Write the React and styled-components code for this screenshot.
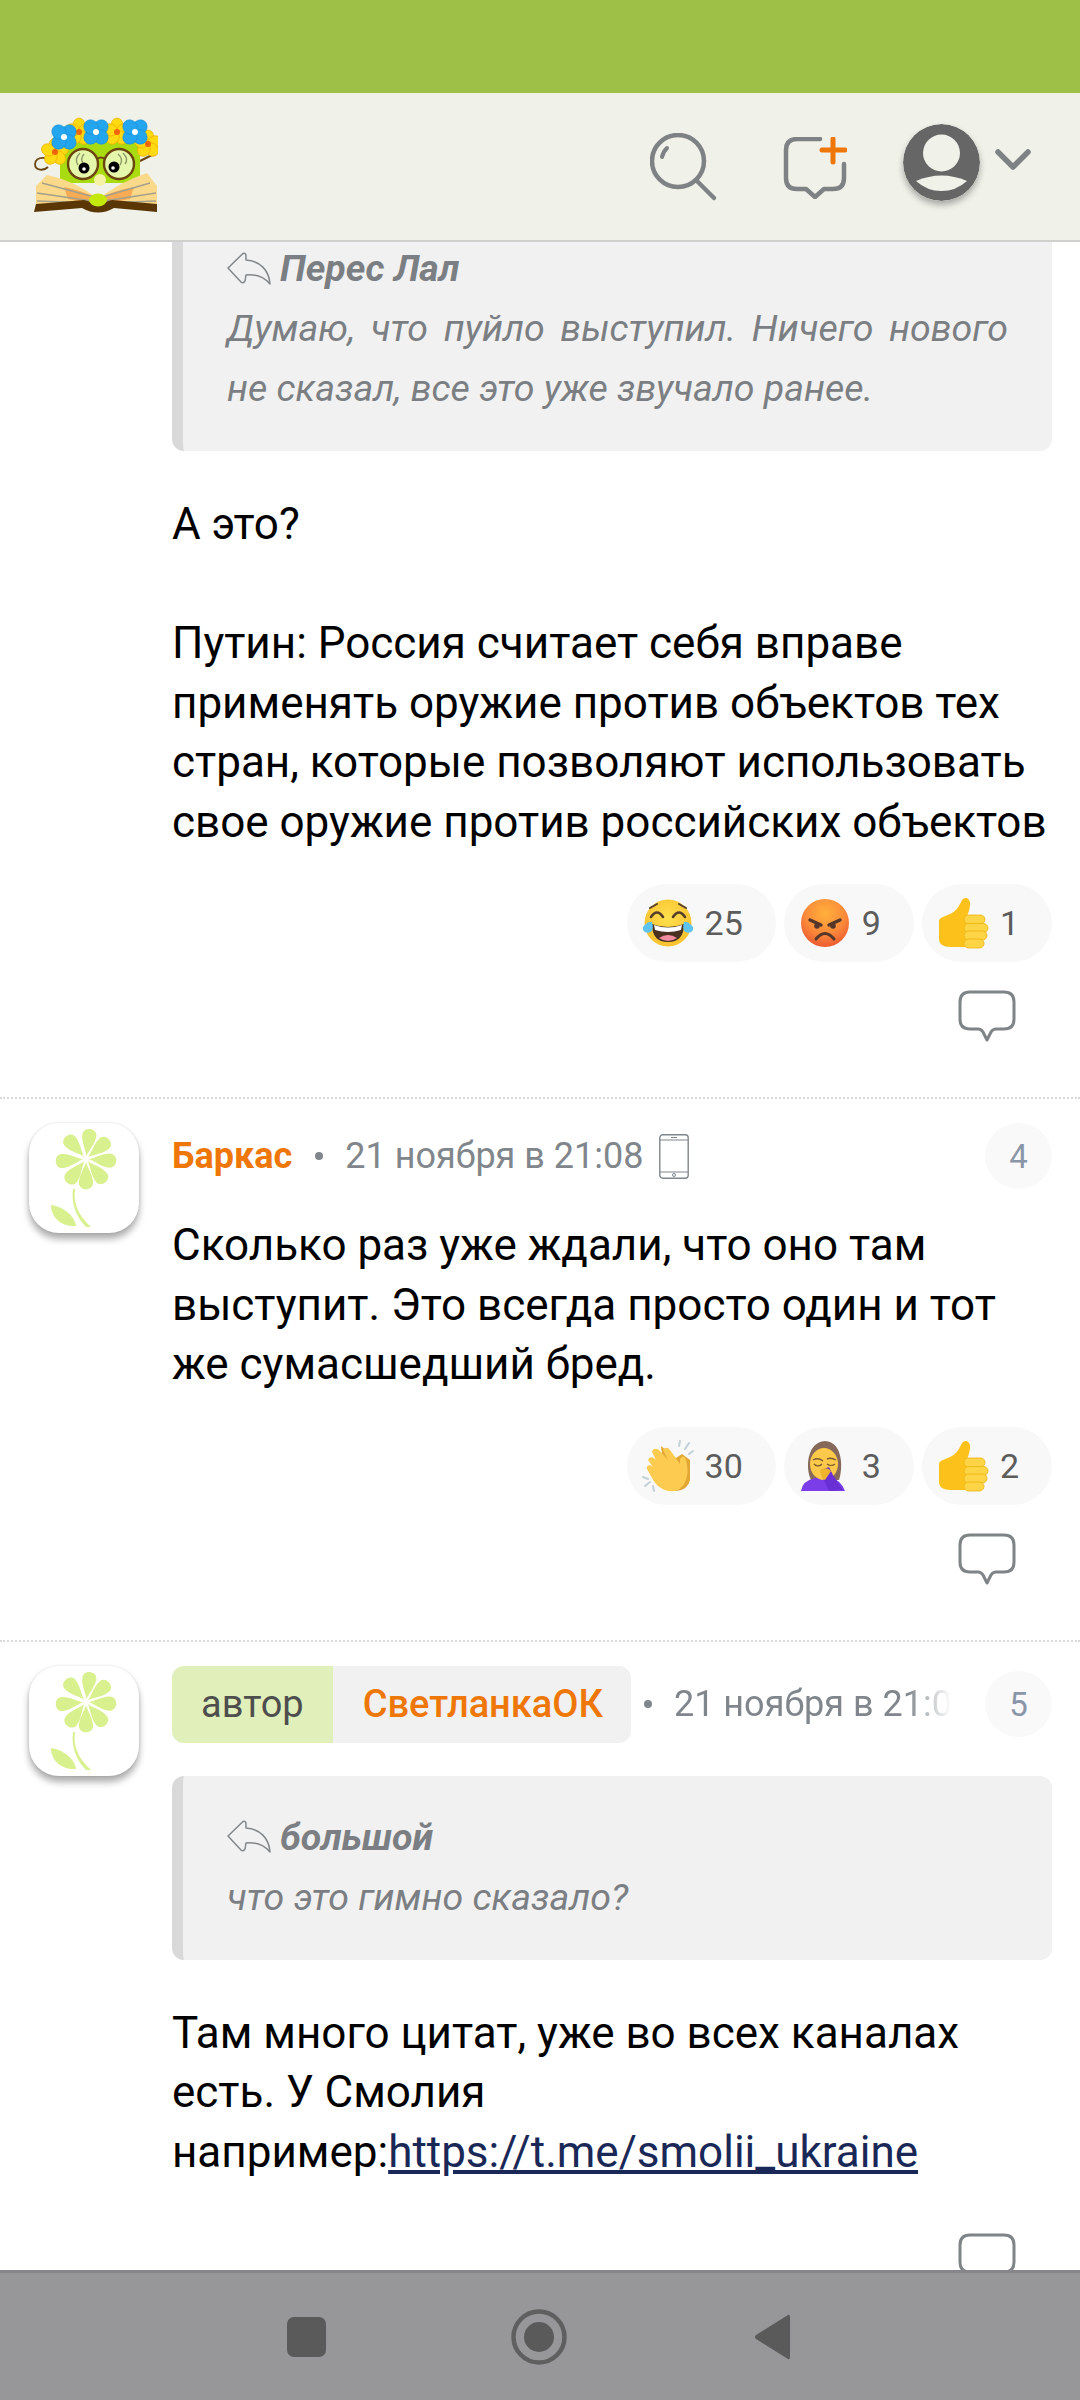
import React from "react";
import styled, { createGlobalStyle } from "styled-components";

const Global = createGlobalStyle`
  html, body { margin: 0; padding: 0; background: #fff; }
  body { font-family: Roboto, "Noto Sans", sans-serif; }
  * { box-sizing: border-box; }
`;

const Screen = styled.div`
  width: 1080px; height: 2400px; display: flex; flex-direction: column; overflow: hidden; background: #fff;
`;
const StatusBar = styled.div`height: 93px; flex: none; background: #9fc046;`;
const Header = styled.header`
  height: 149px; flex: none; display: flex; align-items: center; background: #f0f1e9;
  border-bottom: 2px solid #cfcfcb; padding: 0 49px 0 34px; position: relative; z-index: 2;
`;
const LogoSvg = styled.svg`width: 124px; height: 96px; flex: none; margin-top: -3px;`;
const HeaderTools = styled.div`margin-left: auto; display: flex; align-items: center;`;
const SearchSvg = styled.svg`width: 70px; height: 70px; flex: none; margin-top: 3px;`;
const NewSvg = styled.svg`width: 64px; height: 62px; flex: none; margin-left: 63px; margin-top: 3px;`;
const UserSvg = styled.svg`
  width: 77px; height: 77px; flex: none; margin-left: 56px; margin-top: -8px;
  border-radius: 50%; box-shadow: 0 4px 6px rgba(0,0,0,.3);
`;
const ChevronSvg = styled.svg`width: 36px; height: 22px; flex: none; margin-left: 15px; margin-top: -14px;`;

const Content = styled.main`flex: 1; min-height: 0; overflow: hidden; background: #fff;`;
const Scrolled = styled.div`margin-top: -35px;`;
const Comment = styled.article`
  display: grid; grid-template-columns: 110px minmax(0, 1fr); column-gap: 33px;
  padding: ${p => (p.$first ? "0" : "24px")} 28px ${p => (p.$last ? "0" : "54px")} 29px;
  border-bottom: ${p => (p.$last ? "none" : "2px dotted #d9d9d9")};
`;
const AvatarBox = styled.div`
  width: 110px; height: 110px; border-radius: 30px; background: #fff;
  box-shadow: 0 6px 7px rgba(0,0,0,.32), 0 0 3px rgba(0,0,0,.12);
`;
const Body = styled.div`min-width: 0; display: flex; flex-direction: column;`;
const Meta = styled.div`display: flex; align-items: center; min-height: 66px; font-size: 36px;`;
const Name = styled.span`color: #ee7708; font-weight: 700; font-size: 36px; white-space: nowrap;`;
const Dot = styled.span`
  width: 8px; height: 8px; border-radius: 50%; background: #80868b; flex: none;
  margin: 0 22px 0 ${p => (p.$tight ? 13 : 23)}px;
`;
const DateText = styled.span`color: #80868b; font-size: 36px; white-space: nowrap;`;
const DateClip = styled.div`
  flex: 1; min-width: 0; overflow: hidden; margin-right: 34px;
  -webkit-mask-image: linear-gradient(90deg, #000 84%, transparent 100%);
  mask-image: linear-gradient(90deg, #000 84%, transparent 100%);
`;
const PhoneSvg = styled.svg`width: 30px; height: 45px; flex: none; margin-left: 16px;`;
const NumBadge = styled.div`
  width: 67px; height: 66px; border-radius: 50%; background: #f9f9fa; color: #8a95a8; font-size: 33px;
  display: flex; align-items: center; justify-content: center; flex: none; margin-left: auto;
`;
const AuthorTag = styled.div`
  display: flex; height: 77px; border-radius: 12px; overflow: hidden; flex: none; background: #f1f1f1;
  font-size: 38px; align-items: stretch;
`;
const TagLabel = styled.span`
  background: #e1f0bb; color: #4e4e4e; display: flex; align-items: center; padding: 0 29px;
`;
const TagName = styled.span`
  color: #ee7708; font-weight: 500; display: flex; align-items: center; padding: 0 28px 0 30px; white-space: nowrap;
`;
const Quote = styled.blockquote`
  margin: ${p => (p.$spaced ? "33px" : "0")} 0 0; padding: 31px 44px 33px 44px;
  background: #f1f1f1; border-left: 11px solid #d9d9d9;
  border-radius: ${p => (p.$cut ? "0 0 12px 12px" : "12px")};
  color: #7b7f83; font-size: 37.5px; line-height: 60px; font-style: italic; text-align: justify;
`;
const QuoteAuthor = styled.div`display: flex; align-items: center; font-weight: 700; text-align: left;`;
const ReplySvg = styled.svg`width: 44px; height: 33px; flex: none; margin-right: 9px;`;
const Text = styled.p`
  margin: ${p => p.$mt}px 0 0; font-size: 44px; line-height: 59.5px; color: #000;
`;
const Link = styled.a`color: #1a2858; text-decoration: underline;`;
const Reactions = styled.div`display: flex; justify-content: flex-end; gap: 8px; margin-top: 32px;`;
const Pill = styled.div`
  height: 78px; border-radius: 39px; background: #f8f8f8; color: #5c5c5c; font-size: 34px;
  display: flex; align-items: center; padding: 0 33px 0 15px; gap: 11px;
`;
const EmojiSvg = styled.svg`width: 52px; height: 52px; flex: none;`;
const BubbleSvg = styled.svg`
  width: 58px; height: 53px; flex: none; align-self: flex-end; margin: ${p => p.$mt}px 36px 0 0; display: block;
`;
const Nav = styled.nav`
  height: 130px; flex: none; background: #979799; border-top: 3px solid #85858a;
  display: flex; align-items: center; justify-content: center; gap: 133px; padding-right: 2px; position: relative;
`;
const NavSlot = styled.div`width: 100px; display: flex; justify-content: center; align-items: center;`;
const NavSquare = styled.div`width: 39px; height: 40px; border-radius: 7px; background: #5a5a5a;`;
const NavSvg = styled.svg`width: 56px; height: 56px; flex: none;`;

const Logo = () => (
  <LogoSvg viewBox="0 0 124 96">
    <path d="M26 46 C14 40 2 38 1 47 C1 54 10 54 14 50" fill="none" stroke="#6b4410" strokeWidth="1.8" />
    <path d="M106 44 L118 38" stroke="#6b4410" strokeWidth="2" />
    <rect x="26" y="18" width="80" height="48" rx="2" fill="#a9dc10" />
    {[[21, 35], [45, 15], [83, 15], [114, 27]].map(([x, y]) => (
      <g key={x} transform={`translate(${x} ${y})`}>
        {[0, 72, 144, 216, 288].map(a => (
          <ellipse key={a} cx="0" cy="-7" rx="6" ry="7" fill="#ffd911" stroke="#e9a900" strokeWidth=".6" transform={`rotate(${a})`} />
        ))}
        <circle r="3" fill="#f2640a" />
      </g>
    ))}
    {[[30, 20], [62, 15], [101, 15]].map(([x, y]) => (
      <g key={x} transform={`translate(${x} ${y})`}>
        {[45, 135, 225, 315].map(a => (
          <ellipse key={a} cx="0" cy="-7" rx="7" ry="7.5" fill="#23a6ee" stroke="#1385d0" strokeWidth=".5" transform={`rotate(${a})`} />
        ))}
        <circle r="3" fill="#fff" />
      </g>
    ))}
    <circle cx="49" cy="47" r="15" fill="#e4f7aa" stroke="#6b4410" strokeWidth="2.4" />
    <circle cx="85" cy="47" r="15" fill="#e4f7aa" stroke="#6b4410" strokeWidth="2.4" />
    <path d="M63 42 Q67 39 71 42" fill="none" stroke="#6b4410" strokeWidth="2" />
    <path d="M46 36 Q40 42 44 48 M50 37 Q46 42 49 46" fill="none" stroke="#8f9a6a" strokeWidth="1.4" />
    <path d="M84 37 Q90 42 86 48 M89 36 Q95 42 91 47" fill="none" stroke="#8f9a6a" strokeWidth="1.4" />
    <circle cx="50" cy="51" r="5.5" fill="#000" /><circle cx="50" cy="52" r="1.8" fill="#fff" />
    <circle cx="80" cy="50" r="5.5" fill="#000" /><circle cx="79" cy="51" r="1.8" fill="#fff" />
    <circle cx="66" cy="63" r="6" fill="#f5f2a6" />
    <path d="M2 87 L2 69 L13 58 Q42 64 64 82 L64 90 Z" fill="#fbd98a" />
    <path d="M123 87 L123 69 L113 56 Q88 64 64 82 L64 90 Z" fill="#fbd98a" />
    <path d="M30 70 Q50 74 64 82 Q78 74 100 70 L96 82 L64 88 L34 82 Z" fill="#f4a24a" opacity=".85" />
    <path d="M8 66 L60 80 M3 76 L58 84 M3 84 L58 86 M116 66 L68 80 M122 76 L70 84 M122 84 L70 86" stroke="#a5a08c" strokeWidth="1.5" />
    <path d="M0 95 L2 87 L50 83 Q64 88 78 83 L123 87 L123 95 L80 91 Q64 100 48 91 Z" fill="#5a3604" />
    <ellipse cx="64" cy="83" rx="9" ry="6.5" fill="#c3e80a" />
  </LogoSvg>
);

const Flower = () => (
  <AvatarBox>
    <svg width="110" height="110" viewBox="0 0 110 110">
      {[8, 50, 94, 140, 180, 218, 265, 318].map(a => (
        <path key={a} d="M0 -3 C-2 -10 -7.5 -17 -7 -25 C-6 -32 6 -32 7 -25 C7.5 -17 2 -10 0 -3 Z" fill="#d9f08f" transform={`translate(57 36) rotate(${a})`} />
      ))}
      <path d="M46 66 C44 80 49 92 62 104 L57 104 C47 94 42 80 44 66 Z" fill="#d9f08f" />
      <path d="M22 82 C36 84 46 94 47 103 C34 104 22 96 22 82 Z" fill="#d9f08f" />
    </svg>
  </AvatarBox>
);

const Reply = () => (
  <ReplySvg viewBox="0 0 44 33">
    <path d="M1 16 L16 1.5 Q18 .5 19 3 L19 8 C33 9 42 18 43 32 C37 25 29 22 19 23 L18 29 Q16 32 14 30 Z" fill="none" stroke="#83878a" strokeWidth="1.5" strokeLinejoin="round" />
  </ReplySvg>
);

const Bubble = ({ mt }) => (
  <BubbleSvg $mt={mt} viewBox="0 0 58 53">
    <path d="M12 2 H46 Q56 2 56 12 V29 Q56 39 46 39 H38 Q35 39 33 42 L29 50 L25 42 Q23 39 20 39 H12 Q2 39 2 29 V12 Q2 2 12 2 Z" fill="none" stroke="#7f8487" strokeWidth="3" strokeLinejoin="round" />
  </BubbleSvg>
);

const Phone = () => (
  <PhoneSvg viewBox="0 0 30 45">
    <rect x=".8" y=".8" width="28.4" height="43.4" rx="3" fill="none" stroke="#80868b" strokeWidth="1.4" />
    <path d="M1 6 H29 M1 38 H29 M12 3.5 H18" stroke="#80868b" strokeWidth="1.2" />
    <circle cx="15" cy="41" r="1.5" fill="none" stroke="#80868b" strokeWidth="1" />
  </PhoneSvg>
);

const LaughEmoji = () => (
  <EmojiSvg viewBox="0 0 52 52">
    <defs>
      <radialGradient id="lg" cx=".5" cy=".4" r=".6"><stop offset="0" stopColor="#ffe04e" /><stop offset="1" stopColor="#f8c02e" /></radialGradient>
    </defs>
    <circle cx="26" cy="26" r="23.5" fill="url(#lg)" />
    <path d="M9 20 Q15 11 21 20 M31 20 Q37 11 43 20" fill="none" stroke="#54402a" strokeWidth="2.6" strokeLinecap="round" />
    <path d="M8 11 L15 7 M44 11 L37 7" stroke="#54402a" strokeWidth="2" strokeLinecap="round" />
    <path d="M10 27 Q26 33 42 27 Q42 45 26 45 Q10 45 10 27 Z" fill="#4a3020" />
    <path d="M12 28 Q26 33 40 28 L39 33 Q26 37 13 33 Z" fill="#fff" />
    <path d="M17 41 Q26 35 35 41 Q26 47 17 41 Z" fill="#f28ca0" />
    <path d="M1 30 Q6 24 10 25 Q12 32 9 35 Q3 37 1 33 Z M51 30 Q46 24 42 25 Q40 32 43 35 Q49 37 51 33 Z" fill="#5fc3f0" />
  </EmojiSvg>
);

const AngryEmoji = () => (
  <EmojiSvg viewBox="0 0 52 52">
    <defs>
      <radialGradient id="ag" cx=".5" cy=".3" r=".7"><stop offset="0" stopColor="#ffb03b" /><stop offset=".6" stopColor="#fb8a3a" /><stop offset="1" stopColor="#ec5b30" /></radialGradient>
    </defs>
    <circle cx="26" cy="26" r="24" fill="url(#ag)" />
    <path d="M11 23 L22 28 M41 23 L30 28" stroke="#54362a" strokeWidth="3.4" strokeLinecap="round" />
    <circle cx="18" cy="29" r="2.8" fill="#54362a" /><circle cx="34" cy="29" r="2.8" fill="#54362a" />
    <path d="M17 42 Q26 31 35 42" fill="none" stroke="#54362a" strokeWidth="3" strokeLinecap="round" />
  </EmojiSvg>
);

const ThumbEmoji = () => (
  <EmojiSvg viewBox="0 0 52 52">
    <path d="M2 24 C2 20 10 19 15 16 C22 12 23 5 26 2 C30 -1 34 3 33 9 C32 14 31 17 30 19 L32 19 V50 H14 C6 50 2 47 2 42 Z" fill="#fcc21b" />
    <g fill="#fdd446" stroke="#eeb30e" strokeWidth=".8">
      <rect x="27" y="18" width="21" height="9" rx="4.5" />
      <rect x="27" y="26.5" width="24" height="9" rx="4.5" />
      <rect x="27" y="34" width="23" height="9" rx="4.5" />
      <rect x="27" y="42" width="20" height="9" rx="4.5" />
    </g>
  </EmojiSvg>
);

const ClapEmoji = () => (
  <EmojiSvg viewBox="0 0 52 52">
    <path d="M37 6 L38 1 M43 9 L47 3 M47 14 L51 11 M1 37 L6 39 M3 46 L8 42 M12 51 L11 46" stroke="#c3d0d6" strokeWidth="2" strokeLinecap="round" />
    <path d="M19 6 L34 18 L40 14 L48 20 L48 40 Q46 50 34 51 L24 48 Z" fill="#e2a635" />
    <path d="M6 20 C8 16 11 17 14 20 L10 12 C11 8 15 8 18 11 L26 20 L21 10 C23 7 26 7 28 10 L38 24 L38 19 C40 15 43 16 44 20 C47 32 46 44 36 50 C26 54 15 48 10 38 L5 29 C4 25 8 24 11 27 Z" fill="#fdcb4f" />
  </EmojiSvg>
);

const FacepalmEmoji = () => (
  <EmojiSvg viewBox="0 0 52 52">
    <path d="M12 40 C6 28 8 2 26 1 C44 2 44 28 40 40 Z" fill="#86695a" />
    <path d="M2 51 Q3 41 16 38 L32 38 Q42 40 46 51 Z" fill="#7b3de8" />
    <ellipse cx="25" cy="24" rx="14" ry="16" fill="#fcc94a" />
    <path d="M14 20 Q19 17 24 21 M28 19 Q32 17 37 20" fill="none" stroke="#7c5a2f" strokeWidth="1.4" />
    <path d="M15 24 Q19 28 23 24 M28 24 Q32 27 36 24" fill="none" stroke="#7c5a2f" strokeWidth="1.2" />
    <path d="M22 30 L30 27 L34 35 L44 50 L30 51 L24 38 Z" fill="#6a30d6" />
    <path d="M21 30 Q28 26 32 31 L28 37 L26 40 L23 38 Z" fill="#eeb42c" />
  </EmojiSvg>
);

const Reaction = ({ icon, n }) => <Pill>{icon}<span>{n}</span></Pill>;

export default function App() {
  return (
    <Screen>
      <Global />
      <StatusBar />
      <Header>
        <Logo />
        <HeaderTools>
          <SearchSvg viewBox="0 0 70 70">
            <circle cx="28" cy="28" r="26" fill="none" stroke="#7f8285" strokeWidth="4.5" />
            <path d="M46 47 L64 65" stroke="#7f8285" strokeWidth="4.5" strokeLinecap="round" />
            <path d="M12 24 Q13 19 17 15" fill="none" stroke="#7f8285" strokeWidth="4" strokeLinecap="round" />
          </SearchSvg>
          <NewSvg viewBox="0 0 64 62">
            <path d="M37 2 H14 Q3 2 3 13 V41 Q3 52 14 52 H23 L32 60 L41 52 H50 Q61 52 61 41 V27" fill="none" stroke="#7f8285" strokeWidth="4.5" strokeLinecap="round" strokeLinejoin="round" />
            <path d="M39 13 H62 M50 2 V25" stroke="#ee7708" strokeWidth="5" strokeLinecap="round" />
          </NewSvg>
          <UserSvg viewBox="0 0 77 77">
            <circle cx="38.5" cy="38.5" r="38.5" fill="#666" />
            <circle cx="38.5" cy="29" r="18.5" fill="#f0f1e9" />
            <path d="M13 57 Q38.5 46 64 57 Q53 67 38.5 67 Q24 67 13 57 Z" fill="#f0f1e9" />
          </UserSvg>
          <ChevronSvg viewBox="0 0 36 22">
            <path d="M3 3 L18 18 L33 3" fill="none" stroke="#7f8285" strokeWidth="5.5" strokeLinecap="round" strokeLinejoin="round" />
          </ChevronSvg>
        </HeaderTools>
      </Header>
      <Content>
        <Scrolled>
          <Comment $first>
            <div />
            <Body>
              <Quote $cut>
                <QuoteAuthor><Reply />Перес Лал</QuoteAuthor>
                Думаю, что пуйло выступил. Ничего нового не сказал, все это уже звучало ранее.
              </Quote>
              <Text $mt={44}>А это?<br /><br />Путин: Россия считает себя вправе применять оружие против объектов тех стран, которые позволяют использовать свое оружие против российских объектов</Text>
              <Reactions>
                <Reaction icon={<LaughEmoji />} n="25" />
                <Reaction icon={<AngryEmoji />} n="9" />
                <Reaction icon={<ThumbEmoji />} n="1" />
              </Reactions>
              <Bubble mt={28} />
            </Body>
          </Comment>
          <Comment>
            <Flower />
            <Body>
              <Meta>
                <Name>Баркас</Name><Dot /><DateText>21 ноября в 21:08</DateText><Phone />
                <NumBadge>4</NumBadge>
              </Meta>
              <Text $mt={27}>Сколько раз уже ждали, что оно там выступит. Это всегда просто один и тот же сумасшедший бред.</Text>
              <Reactions>
                <Reaction icon={<ClapEmoji />} n="30" />
                <Reaction icon={<FacepalmEmoji />} n="3" />
                <Reaction icon={<ThumbEmoji />} n="2" />
              </Reactions>
              <Bubble mt={28} />
            </Body>
          </Comment>
          <Comment $last>
            <Flower />
            <Body>
              <Meta>
                <AuthorTag><TagLabel>автор</TagLabel><TagName>СветланкаОК</TagName></AuthorTag>
                <Dot $tight />
                <DateClip><DateText>21 ноября в 21:08</DateText></DateClip>
                <NumBadge>5</NumBadge>
              </Meta>
              <Quote $spaced>
                <QuoteAuthor><Reply />большой</QuoteAuthor>
                что это гимно сказало?
              </Quote>
              <Text $mt={44}>Там много цитат, уже во всех каналах есть. У Смолия например:<Link>https://t.me/smolii_ukraine</Link></Text>
              <Bubble mt={51} />
            </Body>
          </Comment>
        </Scrolled>
      </Content>
      <Nav>
        <NavSlot><NavSquare /></NavSlot>
        <NavSlot>
          <NavSvg viewBox="0 0 56 56">
            <circle cx="28" cy="28" r="25.5" fill="none" stroke="#5f5f5f" strokeWidth="4.5" />
            <circle cx="28" cy="28" r="15" fill="#5a5a5a" />
          </NavSvg>
        </NavSlot>
        <NavSlot>
          <NavSvg viewBox="0 0 56 56">
            <path d="M44 6 Q46 5 46 8 V48 Q46 51 44 50 L12 30 Q10 28 12 26 Z" fill="#5a5a5a" />
          </NavSvg>
        </NavSlot>
      </Nav>
    </Screen>
  );
}
